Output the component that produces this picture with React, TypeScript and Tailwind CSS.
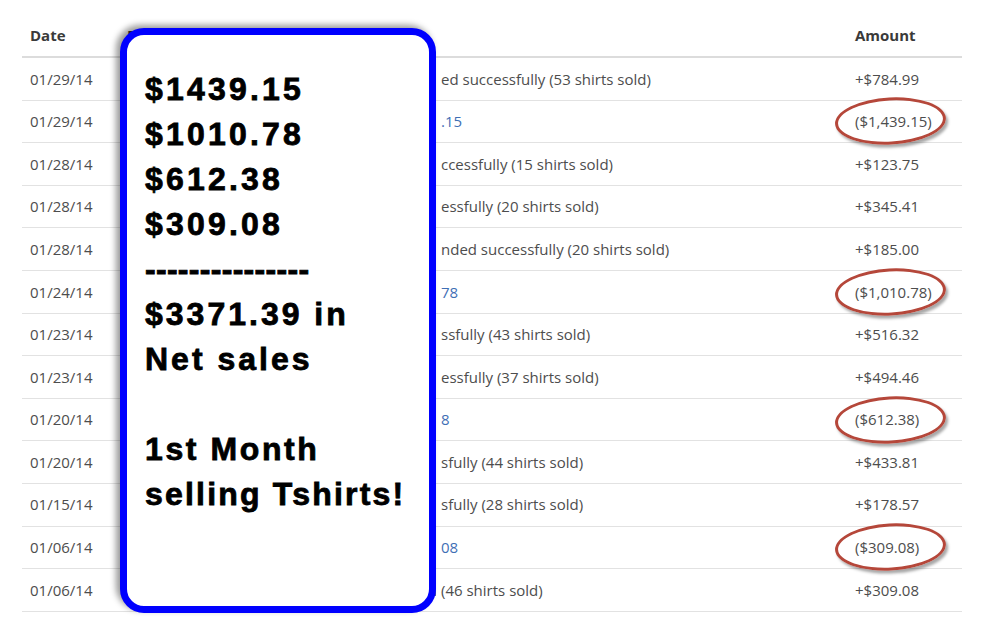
const rows = [
  { date: "01/29/14", pre: "Campaign \"Proud Fishing Grandpa Shirt\" end", desc: "ed successfully (53 shirts sold)", amount: "+$784.99" },
  { date: "01/29/14", pre: "Payout sent to your PayPal account: $1,439", desc: ".15", amount: "($1,439.15)", link: true },
  { date: "01/28/14", pre: "Campaign \"Awesome Sister Tee\" ended su", desc: "ccessfully (15 shirts sold)", amount: "+$123.75" },
  { date: "01/28/14", pre: "Campaign \"Best Nurse Ever\" ended succ", desc: "essfully (20 shirts sold)", amount: "+$345.41" },
  { date: "01/28/14", pre: "Campaign \"Grumpy Old Man Shirt\" e", desc: "nded successfully (20 shirts sold)", amount: "+$185.00" },
  { date: "01/24/14", pre: "Payout sent to your PayPal account: $1,010.", desc: "78", amount: "($1,010.78)", link: true },
  { date: "01/23/14", pre: "Campaign \"I Love My Welder\" ended succe", desc: "ssfully (43 shirts sold)", amount: "+$516.32" },
  { date: "01/23/14", pre: "Campaign \"Trucker Wife Tee\" ended succ", desc: "essfully (37 shirts sold)", amount: "+$494.46" },
  { date: "01/20/14", pre: "Payout sent to your PayPal account: $612.3", desc: "8", amount: "($612.38)", link: true },
  { date: "01/20/14", pre: "Campaign \"Firefighter Girl\" ended succes", desc: "sfully (44 shirts sold)", amount: "+$433.81" },
  { date: "01/15/14", pre: "Campaign \"Never Underestimate\" ended succes", desc: "sfully (28 shirts sold)", amount: "+$178.57" },
  { date: "01/06/14", pre: "Payout sent to your PayPal account: $309.", desc: "08", amount: "($309.08)", link: true },
  { date: "01/06/14", pre: "Campaign \"Fishing Grandpa\" ended successfully ", desc: "(46 shirts sold)", amount: "+$309.08" },
];

const noteLines = [
  { text: "$1439.15", cls: "tracking-[3.2px]" },
  { text: "$1010.78", cls: "tracking-[3.2px]" },
  { text: "$612.38", cls: "tracking-[3.2px]" },
  { text: "$309.08", cls: "tracking-[3.2px]" },
  { text: "---------------", cls: "tracking-[0.3px]" },
  { text: "$3371.39 in", cls: "tracking-[3px]" },
  { text: "Net sales", cls: "tracking-[3px]" },
  { text: "", cls: "" },
  { text: "1st Month", cls: "tracking-[2.6px]" },
  { text: "selling Tshirts!", cls: "tracking-[2.2px]" },
];

const App = () => {
  return (
    <div className="relative h-[619px] w-[992px] overflow-hidden bg-white font-['Open_Sans','Lato',sans-serif] text-[15px] text-[#4d4d4d]">
      {/* Transactions table */}
      <div className="ml-[22px] mr-[30px] pt-[14px]">
        <div className="flex h-[44px] items-center border-b-2 border-[#dcdcdc] font-bold text-[#3a3a3a]">
          <div className="w-[97px] pl-2">Date</div>
          <div className="flex-1 pl-2">Description</div>
          <div className="w-[115px] pl-2">Amount</div>
        </div>
        {rows.map((r, i) => (
          <div key={i} className="flex h-[42.6px] items-center border-b border-[#e2e2e2]">
            <div className="w-[97px] pl-2">{r.date}</div>
            <div className={r.link ? "flex flex-1 whitespace-nowrap pl-2 text-[#3f6fb5]" : "flex flex-1 whitespace-nowrap pl-2"}>
              <span className="mr-[5px] w-[309px] overflow-hidden">{r.pre}</span>
              <span>{r.desc}</span>
            </div>
            <div className="relative w-[115px] pl-2">
              {r.amount}
              {r.link && (
                <div className="absolute left-[-12px] top-1/2 h-[47px] w-[111px] -translate-y-1/2 -rotate-[3deg] rounded-[50%] border-[3px] border-[#b5473a] shadow-[2px_3px_3px_rgba(0,0,0,0.35)]" />
              )}
            </div>
          </div>
        ))}
      </div>

      {/* Annotation card */}
      <div className="absolute left-[120px] top-[28px] h-[585px] w-[316px] rounded-[24px] border-[7px] border-[#0000ff] bg-white pl-[18px] pt-[32px] font-['Liberation_Sans','Arial',sans-serif] text-[32px] font-bold leading-[45px] text-black shadow-[-4px_-3px_6px_rgba(0,0,0,0.4)] [-webkit-text-stroke:0.8px_black]">
        {noteLines.map((l, i) => (
          <div key={i} className={`h-[45px] whitespace-nowrap ${l.cls}`}>
            {l.text}
          </div>
        ))}
      </div>
    </div>
  );
};

export default App;
